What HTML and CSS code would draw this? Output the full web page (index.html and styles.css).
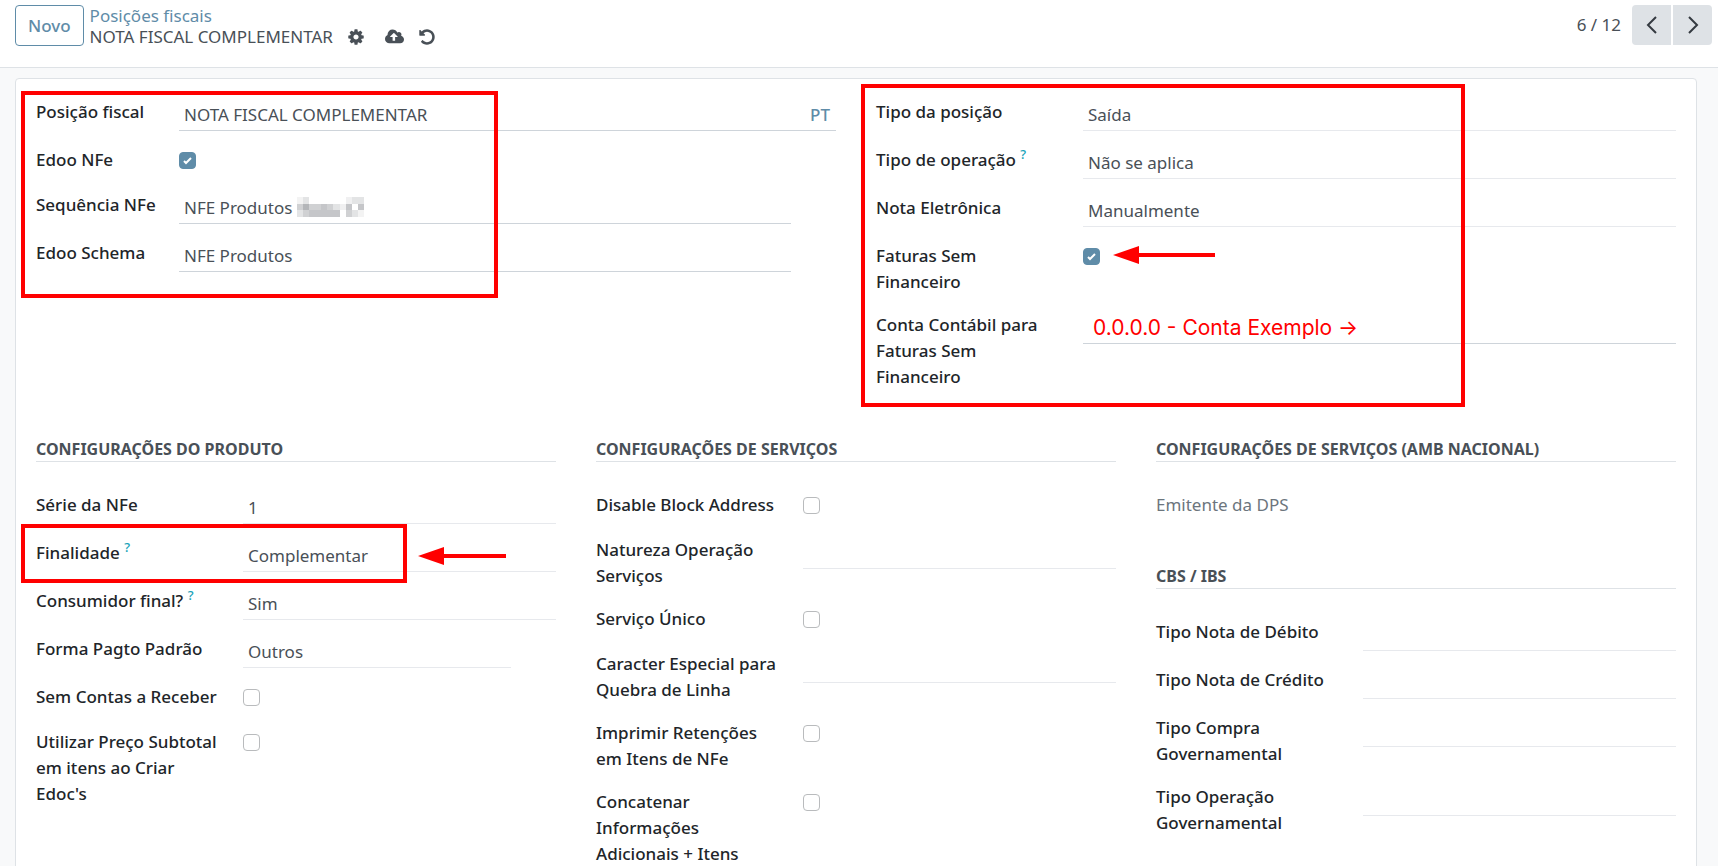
FILE: index.html
```
<!DOCTYPE html>
<html lang="pt-BR">
<head>
    <meta charset="UTF-8">
    <meta name="viewport" content="width=device-width, initial-scale=1.0">
    <title>Posições fiscais</title>
    <link rel="stylesheet" href="styles.css">
</head>
<body>
    <!-- Control panel -->
    <header class="control-panel">
        <button type="button" class="btn-new">Novo</button>
        <div class="breadcrumb">
            <a href="#">Posições fiscais</a>
            <div class="breadcrumb-current">
                <span>NOTA FISCAL COMPLEMENTAR</span>
                <button type="button" class="icon-btn" aria-label="Ações">
                    <svg width="18" height="18" viewBox="0 0 1792 1792"><path d="M1152 896q0-106-75-181t-181-75-181 75-75 181 75 181 181 75 181-75 75-181zm512-109v222q0 12-8 23t-20 13l-185 28q-19 54-39 91 35 50 107 138 10 12 10 25t-9 23q-27 37-99 108t-94 71q-12 0-26-9l-138-108q-44 23-91 38-16 136-29 186-7 28-36 28h-222q-14 0-24.500-8.500t-11.500-21.500l-28-184q-49-16-90-37l-141 107q-10 9-25 9-14 0-25-11-126-114-165-168-7-10-7-23 0-12 8-23 15-21 51-66.500t54-70.500q-27-50-41-99l-183-27q-13-2-21-12.500t-8-23.500v-222q0-12 8-23t19-13l186-28q14-46 39-92-40-57-107-138-10-12-10-24 0-10 9-23 26-36 98.500-107.500t94.500-71.500q13 0 26 10l138 107q44-23 91-38 16-136 29-186 7-28 36-28h222q14 0 24.500 8.500t11.500 21.500l28 184q49 16 90 37l142-107q9-9 24-9 13 0 25 10 129 119 165 170 7 8 7 22 0 12-8 23-15 21-51 66.500t-54 70.500q26 50 41 98l183 28q13 2 21 12.500t8 23.500z"/></svg>
                </button>
                <button type="button" class="icon-btn icon-save" aria-label="Salvar">
                    <svg width="19" height="18" viewBox="-64 0 1920 1792"><path d="M1216 864q0-14-9-23l-352-352q-9-9-23-9t-23 9l-351 351q-10 12-10 24 0 14 9 23t23 9h224v352q0 13 9.500 22.500t22.500 9.500h192q13 0 22.500-9.500t9.500-22.500v-352h224q13 0 22.500-9.500t9.500-22.500zm640 288q0 159-112.500 271.500t-271.500 112.500h-1088q-185 0-316.500-131.500t-131.500-316.500q0-130 70-240t188-165q-2-30-2-43 0-212 150-362t362-150q156 0 285.500 87t188.500 231q71-62 166-62 106 0 181 75t75 181q0 76-41 138 130 31 213.500 135.500t83.500 238.500z"/></svg>
                </button>
                <button type="button" class="icon-btn" aria-label="Descartar">
                    <svg width="18" height="18" viewBox="0 0 1792 1792"><path d="M1664 896q0 156-61 298t-164 245-245 164-298 61q-172 0-327-72.500t-264-204.500q-7-10-6.500-22.500t8.500-20.500l137-138q10-9 25-9 16 2 23 12 73 95 179 147t225 52q104 0 198.500-40.500t163.500-109.500 109.500-163.500 40.500-198.500-40.500-198.500-109.500-163.500-163.500-109.500-198.500-40.500q-98 0-188 35.500t-160 101.500l137 138q31 30 14 69-17 40-59 40h-448q-26 0-45-19t-19-45v-448q0-42 40-59 39-17 69 14l130 129q107-101 244.500-156.500t284.500-55.500q156 0 298 61t245 164 164 245 61 298z"/></svg>
                </button>
            </div>
        </div>
        <div class="pager">
            <span>6 / 12</span>
            <div class="pager-buttons">
                <button type="button" aria-label="Anterior">
                    <svg width="12" height="20" viewBox="0 0 12 20"><path d="M10 2L2 10l8 8"/></svg>
                </button>
                <button type="button" aria-label="Próximo">
                    <svg width="12" height="20" viewBox="0 0 12 20"><path d="M2 2l8 8-8 8"/></svg>
                </button>
            </div>
        </div>
    </header>

    <!-- Form -->
    <main class="content">
        <form class="sheet">
            <div class="groups groups-2">
                <div class="group group-narrow">
                    <div class="row">
                        <label for="name">Posição fiscal</label>
                        <div class="field field-translate">
                            <input type="text" id="name" value="NOTA FISCAL COMPLEMENTAR">
                            <button type="button" class="btn-lang">PT</button>
                        </div>
                    </div>
                    <div class="row">
                        <label for="edoo-nfe">Edoo NFe</label>
                        <div class="field"><input type="checkbox" id="edoo-nfe" checked></div>
                    </div>
                    <div class="row">
                        <label for="sequence">Sequência NFe</label>
                        <div class="field field-short field-line">
                            <input type="text" id="sequence" value="NFE Produtos">
                            <svg class="mosaic" width="67" height="20" viewBox="0 0 67 20" shape-rendering="crispEdges">
                                <path fill="#f3f3f3" d="M0 0h6v7H0zM61 13h6v7h-6z"/>
                                <path fill="#e3e4e5" d="M6 0h6v7H6zM0 13h6v7H0zM55 0h12v7H55zM55 13h6v7h-6zM36 7h7v6h-7z"/>
                                <path fill="#d0d1d3" d="M0 7h6v6H0zM12 7h12v6H12zM6 13h6v7H6zM49 13h6v7h-6zM30 7h6v6h-6z"/>
                                <path fill="#b4b6b9" d="M6 7h6v6H6z"/>
                                <path fill="#c5c6c9" d="M24 7h6v6h-6zM12 13h24v7H12zM36 13h7v7h-7zM49 7h6v6h-6zM61 7h6v6h-6z"/>
                                <path fill="#f0f0f1" d="M43 7h6v6h-6zM49 0h6v7h-6z"/>
                            </svg>
                        </div>
                    </div>
                    <div class="row">
                        <label for="schema">Edoo Schema</label>
                        <div class="field field-short"><input type="text" id="schema" value="NFE Produtos"></div>
                    </div>
                    <div class="mark mark-left"></div>
                </div>

                <div class="group">
                    <div class="row">
                        <label for="position-type">Tipo da posição</label>
                        <div class="field"><select id="position-type"><option>Saída</option></select></div>
                    </div>
                    <div class="row">
                        <label for="operation-type">Tipo de operação <sup>?</sup></label>
                        <div class="field"><select id="operation-type"><option>Não se aplica</option></select></div>
                    </div>
                    <div class="row">
                        <label for="einvoice">Nota Eletrônica</label>
                        <div class="field"><select id="einvoice"><option>Manualmente</option></select></div>
                    </div>
                    <div class="row">
                        <label for="no-finance">Faturas Sem Financeiro</label>
                        <div class="field"><input type="checkbox" id="no-finance" checked></div>
                        <svg class="arrow arrow-finance" width="102" height="18" viewBox="0 0 102 18"><path d="M0 9L26 0v7h76v4H26v7z"/></svg>
                    </div>
                    <div class="row">
                        <label for="account">Conta Contábil para Faturas Sem Financeiro</label>
                        <div class="field"><input type="text" id="account" class="account" value="0.0.0.0 - Conta Exemplo →"></div>
                    </div>
                    <div class="mark mark-right"></div>
                </div>
            </div>

            <div class="groups groups-3">
                <div class="group">
                    <h2>Configurações do Produto</h2>
                    <div class="row">
                        <label for="serie">Série da NFe</label>
                        <div class="field field-soft"><input type="text" id="serie" value="1"></div>
                    </div>
                    <div class="row">
                        <label for="purpose">Finalidade <sup>?</sup></label>
                        <div class="field"><select id="purpose"><option>Complementar</option></select></div>
                        <div class="mark mark-purpose"></div>
                        <svg class="arrow arrow-purpose" width="88" height="18" viewBox="0 0 88 18"><path d="M0 9L26 0v7h62v4H26v7z"/></svg>
                    </div>
                    <div class="row">
                        <label for="final-consumer">Consumidor final? <sup>?</sup></label>
                        <div class="field"><select id="final-consumer"><option>Sim</option></select></div>
                    </div>
                    <div class="row">
                        <label for="payment">Forma Pagto Padrão</label>
                        <div class="field field-soft field-short"><input type="text" id="payment" value="Outros"></div>
                    </div>
                    <div class="row">
                        <label for="no-receivable">Sem Contas a Receber</label>
                        <div class="field"><input type="checkbox" id="no-receivable"></div>
                    </div>
                    <div class="row">
                        <label for="subtotal">Utilizar Preço Subtotal em itens ao Criar Edoc's</label>
                        <div class="field"><input type="checkbox" id="subtotal"></div>
                    </div>
                </div>

                <div class="group">
                    <h2>Configurações de Serviços</h2>
                    <div class="row">
                        <label for="block-address">Disable Block Address</label>
                        <div class="field"><input type="checkbox" id="block-address"></div>
                    </div>
                    <div class="row">
                        <label for="nature">Natureza Operação Serviços</label>
                        <div class="field"><select id="nature"><option></option></select></div>
                    </div>
                    <div class="row">
                        <label for="single-service">Serviço Único</label>
                        <div class="field"><input type="checkbox" id="single-service"></div>
                    </div>
                    <div class="row">
                        <label for="line-break">Caracter Especial para Quebra de Linha</label>
                        <div class="field field-soft"><input type="text" id="line-break"></div>
                    </div>
                    <div class="row">
                        <label for="retentions">Imprimir Retenções em Itens de NFe</label>
                        <div class="field"><input type="checkbox" id="retentions"></div>
                    </div>
                    <div class="row">
                        <label for="concat">Concatenar Informações Adicionais + Itens</label>
                        <div class="field"><input type="checkbox" id="concat"></div>
                    </div>
                </div>

                <div class="group">
                    <h2>Configurações de Serviços (AMB Nacional)</h2>
                    <div class="row">
                        <span class="label-muted">Emitente da DPS</span>
                    </div>
                    <h2 class="next-title">CBS / IBS</h2>
                    <div class="row">
                        <label for="debit-note">Tipo Nota de Débito</label>
                        <div class="field"><select id="debit-note"><option></option></select></div>
                    </div>
                    <div class="row">
                        <label for="credit-note">Tipo Nota de Crédito</label>
                        <div class="field"><select id="credit-note"><option></option></select></div>
                    </div>
                    <div class="row">
                        <label for="gov-purchase">Tipo Compra Governamental</label>
                        <div class="field"><select id="gov-purchase"><option></option></select></div>
                    </div>
                    <div class="row">
                        <label for="gov-operation">Tipo Operação Governamental</label>
                        <div class="field"><select id="gov-operation"><option></option></select></div>
                    </div>
                </div>
            </div>
        </form>
    </main>
</body>
</html>
```
FILE: styles.css
```
/* General Reset */
* {
    margin: 0;
    padding: 0;
    box-sizing: border-box;
}

body {
    display: flex;
    flex-direction: column;
    height: 100vh;
    font-family: 'Noto Sans', sans-serif;
    font-size: 17px;
    line-height: 26px;
    background: #f8f9fa;
    color: #495057;
}

button, input, select {
    font: inherit;
    color: inherit;
    background: none;
    border: none;
}

button {
    cursor: pointer;
}

a {
    color: #5f8ca8;
    text-decoration: none;
}

/* Control panel */
.control-panel {
    display: flex;
    align-items: flex-start;
    flex-shrink: 0;
    height: 68px;
    padding: 5px 6px 0 15px;
    background: #fff;
    border-bottom: 1px solid #dee2e6;
}

.btn-new {
    height: 41px;
    padding: 0 12px;
    border: 1px solid #5f8ca8;
    border-radius: 4px;
    color: #5f8ca8;
    font-weight: 500;
}

.breadcrumb {
    margin-left: 6px;
    line-height: 21px;
}

.breadcrumb a {
    display: block;
}

.breadcrumb-current {
    display: flex;
    align-items: center;
}

.icon-btn {
    display: flex;
    margin-left: 14px;
}

.icon-btn svg {
    fill: #495057;
}

.icon-save {
    margin-left: 20px;
}

.pager {
    display: flex;
    align-items: center;
    gap: 11px;
    margin-left: auto;
}

.pager-buttons {
    display: flex;
    gap: 2px;
}

.pager-buttons button {
    display: flex;
    align-items: center;
    justify-content: center;
    width: 39px;
    height: 40px;
    background: #dee2e6;
}

.pager-buttons button:first-child {
    border-radius: 4px 0 0 4px;
}

.pager-buttons button:last-child {
    border-radius: 0 4px 4px 0;
}

.pager-buttons svg {
    fill: none;
    stroke: #343a40;
    stroke-width: 2;
}

/* Sheet */
.content {
    flex: 1;
    overflow-y: auto;
    scrollbar-width: none;
    padding: 10px 21px 16px 15px;
}

.sheet {
    padding: 20px 20px 40px;
    background: #fff;
    border: 1px solid #dee2e6;
    border-radius: 4px;
}

.groups {
    display: grid;
    column-gap: 40px;
}

.groups-2 {
    grid-template-columns: repeat(2, 1fr);
}

.groups-3 {
    grid-template-columns: repeat(3, 1fr);
    margin-top: 46px;
}

.group {
    position: relative;
    display: flex;
    flex-direction: column;
    gap: 16px;
}

.group h2 {
    margin-bottom: 14px;
    border-bottom: 1px solid #dee2e6;
    font-size: 16px;
    line-height: 24px;
    font-weight: 700;
    text-transform: uppercase;
}

.group .next-title {
    margin-top: 27px;
}

/* Rows */
.row {
    position: relative;
    display: flex;
    min-height: 29px;
}

.row label {
    flex: 0 0 187px;
    margin-right: 20px;
    padding-bottom: 1px;
    color: #212529;
    font-weight: 500;
}

.group-narrow label {
    flex-basis: 123px;
}

.row sup {
    color: #17a2b8;
    font-size: 13px;
    line-height: 13px;
}

.label-muted {
    color: #6c757d;
}

.field {
    flex: 1;
    min-width: 0;
}

.field-short {
    margin-right: 45px;
}

.field input[type="text"],
.field select {
    display: block;
    width: 100%;
    height: 32px;
    padding: 2px 5px;
    border-bottom: 1px solid #ced4da;
    outline: none;
    appearance: none;
}

.field select,
.field-soft input[type="text"] {
    border-bottom-color: #e7e9ed;
}

.field input.account[type="text"] {
    padding: 2px 10px;
    color: #f00;
    font-family: Inter, sans-serif;
    font-size: 21px;
}

.field input[type="checkbox"] {
    display: block;
    width: 17px;
    height: 17px;
    margin-top: 5px;
    border: 1px solid #b9bbbd;
    border-radius: 4px;
    appearance: none;
}

.field input[type="checkbox"]:checked {
    border-color: #5f8ca8;
    background: #5f8ca8 url("data:image/svg+xml,%3Csvg xmlns='http://www.w3.org/2000/svg' viewBox='0 0 17 17'%3E%3Cpath fill='none' stroke='%23fff' stroke-width='2' d='M5 9l2 2 5-5'/%3E%3C/svg%3E") center / 17px no-repeat;
}

.field-translate {
    display: flex;
    border-bottom: 1px solid #ced4da;
    height: 32px;
}

.field-translate input[type="text"] {
    height: 31px;
    border-bottom: none;
}

.btn-lang {
    padding: 0 6px;
    color: #5f8ca8;
    font-weight: 500;
}

/* Hidden part of the sequence name */
.field-line {
    position: relative;
}

.mosaic {
    position: absolute;
    left: 118px;
    top: 5px;
}

/* Red marks over the form */
.mark {
    position: absolute;
    border: 4px solid #f00;
    pointer-events: none;
}

.mark-left {
    left: -15px;
    top: -8px;
    width: 477px;
    height: 207px;
}

.mark-right {
    left: -15px;
    top: -15px;
    width: 604px;
    height: 323px;
}

.mark-purpose {
    left: -15px;
    top: -16px;
    width: 386px;
    height: 59px;
}

.arrow {
    position: absolute;
    fill: #f00;
}

.arrow-finance {
    left: 237px;
    top: 3px;
}

.arrow-purpose {
    left: 382px;
    top: 7px;
}
```
